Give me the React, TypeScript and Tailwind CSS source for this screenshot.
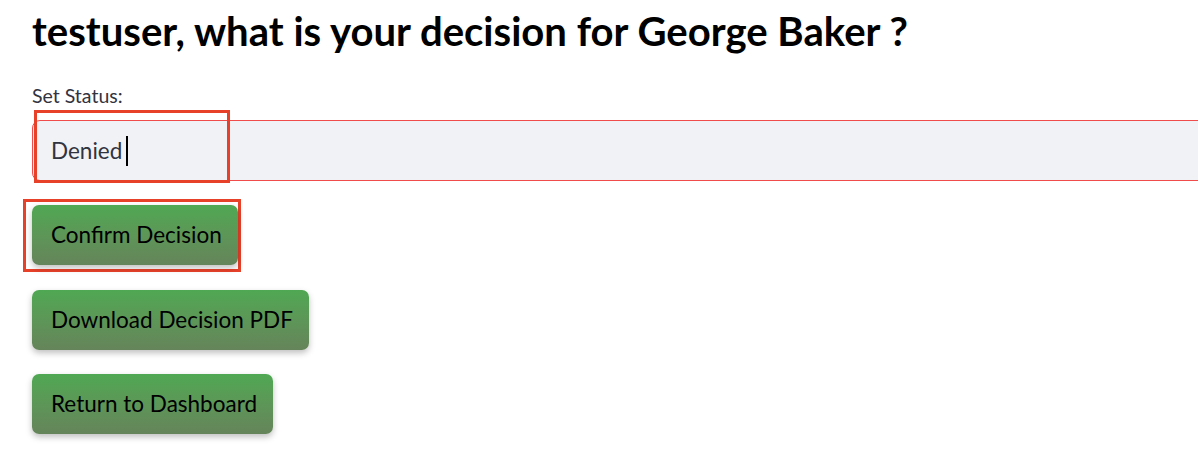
import React from "react";

const font = { fontFamily: "Lato, 'Noto Sans', sans-serif" };

function ActionButton({ label, ring }: { label: string; ring?: boolean }) {
  const btn = (
    <button
      type="button"
      className="h-[60px] pl-[19px] pr-[16px] rounded-[7px] bg-gradient-to-b from-[#4fa853] to-[#65845a] text-black text-[22.5px] shadow-[0_3px_6px_rgba(0,0,0,0.25)]"
    >
      {label}
    </button>
  );
  if (!ring) return btn;
  return (
    <div className="-ml-[9px] -my-[6px] w-fit border-[3px] border-[#e8412a] pt-[3px] pb-[4px] pl-[6px] pr-[0px]">
      {btn}
    </div>
  );
}

export default function App() {
  return (
    <div className="w-[1198px] h-[452px] overflow-hidden bg-white text-[#31333f]" style={font}>
      <div className="pl-[32px] pt-[6px]">
        <h1 className="text-[40.1px] font-bold text-black leading-[50px]">
          testuser, what is your decision for George Baker ?
        </h1>
        <label className="block mt-[30px] text-[19.5px] leading-[20px] text-[#31333f]">Set Status:</label>
        <div className="relative mt-[14px] mr-[-20px] h-[61px] rounded-[8px] border border-[#f04c4c] bg-[#f0f2f6] flex items-center pl-[18px]">
          <span className="text-[22.5px] text-[#31333f]">Denied</span>
          <span className="ml-[4px] w-[2px] h-[30px] bg-black" />
          <div className="absolute left-[1px] top-[-11px] w-[196px] h-[73px] border-[3px] border-[#e8412a]" />
        </div>
        <div className="mt-[24px] flex flex-col items-start gap-[24px]">
          <ActionButton label="Confirm Decision" ring />
          <ActionButton label="Download Decision PDF" />
          <ActionButton label="Return to Dashboard" />
        </div>
      </div>
    </div>
  );
}
